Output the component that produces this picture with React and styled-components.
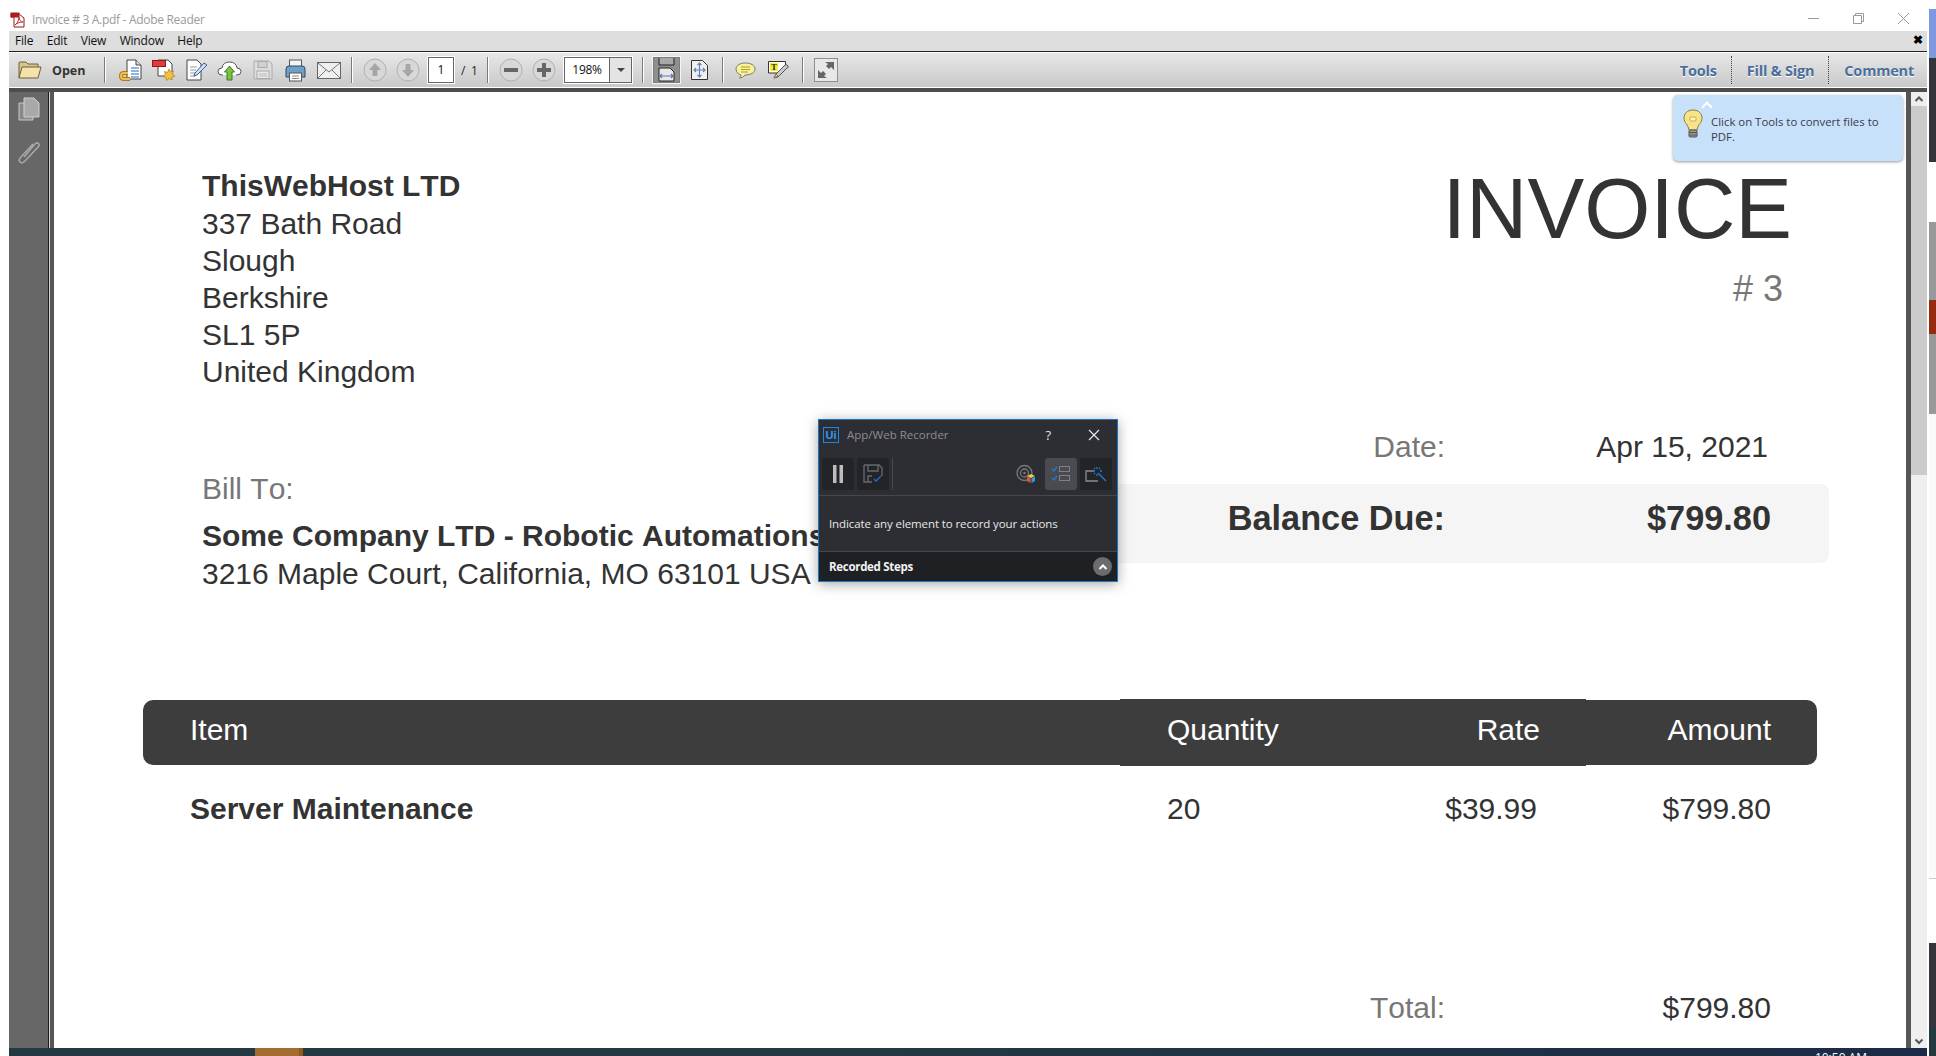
import React from 'react';
import styled, { createGlobalStyle } from 'styled-components';

const GlobalStyle = createGlobalStyle`
  html, body { margin: 0; padding: 0; background: #fff; }
  * { box-sizing: border-box; }
`;

const UI_FONT = '"Open Sans", "Noto Sans", sans-serif';
const DOC_FONT = '"Liberation Sans", Arial, sans-serif';

const Screen = styled.div`
  position: relative;
  display: flex;
  width: 1936px;
  height: 1056px;
  overflow: hidden;
  background: #fff;
`;

const Main = styled.div`
  display: flex;
  flex-direction: column;
  width: 1918px;
  margin-left: 9px;
  height: 100%;
`;

const TitleBar = styled.div`
  display: flex;
  align-items: center;
  height: 31px;
  padding: 7px 0 0 1px;
  font: 12px ${UI_FONT};
  color: #9a9a9a;
`;

const TitleIcon = styled.span`
  display: flex;
  margin-right: 5px;
`;

const TitleText = styled.span`
  letter-spacing: -0.3px;
`;

const WinControls = styled.div`
  display: flex;
  align-items: center;
  margin-left: auto;
  margin-top: -1px;
  gap: 34px;
  padding-right: 18px;
`;

const MenuBar = styled.div`
  display: flex;
  align-items: center;
  height: 20px;
  padding: 0 0 2px 6px;
  gap: 13.500px;
  background: #dedede;
  font: 12px ${UI_FONT};
  letter-spacing: -0.2px;
  color: #111;
`;

const CloseMark = styled.span`
  margin-left: auto;
  margin-right: 4px;
  font: bold 12px ${DOC_FONT};
  color: #000;
`;

const Toolbar = styled.div`
  display: flex;
  align-items: center;
  height: 37px;
  padding-top: 1px;
  border-top: 1px solid #222;
  border-bottom: 1px solid #fff;
  box-shadow: inset 0 1px 0 #fff;
  background: linear-gradient(#e8e8e8, #c9c9c9);
`;

const OpenButton = styled.div`
  display: flex;
  align-items: center;
  width: 95px;
  padding-left: 9px;
  gap: 10px;
  font: bold 12.5px ${UI_FONT};
  color: #333;
`;

const Sep = styled.div`
  width: 2px;
  height: 26px;
  margin-left: ${(p) => p.$ml}px;
  background: linear-gradient(90deg, #7a7a7a 50%, #fff 50%);
`;

const Tool = styled.div`
  display: flex;
  align-items: center;
  justify-content: center;
  flex: none;
  width: ${(p) => p.$w || 33}px;
  height: 28px;
  margin-left: ${(p) => p.$ml || 0}px;
`;

const ActiveTool = styled(Tool)`
  height: 26px;
  background: #8f8f8f;
  border: 1px solid #7d7d7d;
  outline: 1px solid #f4f4f4;
`;

const PageInput = styled.div`
  width: 26px;
  height: 26px;
  margin-left: 4px;
  border: 1px solid #666;
  outline: 1px solid #fff;
  background: #fff;
  text-align: center;
  font: 12px/24px ${UI_FONT};
  color: #111;
`;

const PageTotal = styled.span`
  margin-left: 7px;
  width: 15px;
  white-space: nowrap;
  font: 12px ${UI_FONT};
  word-spacing: 2.500px;
  color: #222;
`;

const ZoomBox = styled.div`
  display: flex;
  width: 68px;
  height: 26px;
  margin-left: 4px;
  border: 1px solid #666;
  outline: 1px solid #fff;
  background: #fff;
  font: 12px/24px ${UI_FONT};
  color: #111;
`;

const ZoomValue = styled.span`
  flex: 1;
  text-align: center;
  letter-spacing: -0.3px;
`;

const ZoomArrow = styled.span`
  display: flex;
  align-items: center;
  justify-content: center;
  width: 22px;
  border-left: 1px solid #666;
  background: #e4e4e4;
  &::after {
    content: '';
    border-left: 4px solid transparent;
    border-right: 4px solid transparent;
    border-top: 4px solid #444;
  }
`;

const PaneTabs = styled.div`
  display: flex;
  align-items: center;
  height: 100%;
  margin-left: auto;
`;

const PaneTab = styled.div`
  display: flex;
  align-items: center;
  height: 28px;
  padding: 0 ${(p) => p.$pr}px 0 ${(p) => p.$pl}px;
  border-left: ${(p) => (p.$first ? 'none' : '1px dotted #444')};
  font: bold 14.500px ${UI_FONT};
  letter-spacing: -0.2px;
  color: #4b6f9b;
  text-shadow: 0 1px 0 #fff;
`;

const DarkStrip = styled.div`
  height: 4px;
  background: #4d4d4d;
`;

const Body = styled.div`
  display: flex;
  flex: 1;
  min-height: 0;
`;

const NavPane = styled.div`
  display: flex;
  flex-direction: column;
  align-items: center;
  gap: 18px;
  width: 39px;
  padding-top: 5px;
  background: #676767;
`;

const NavEdge = styled.div`
  width: 6px;
  background: linear-gradient(90deg, #1c1c1c 1px, #d5d5d5 1px, #d5d5d5 2px, #565656 2px);
`;

const Page = styled.div`
  width: 1852px;
  overflow: hidden;
  background: #fff;
  font-family: ${DOC_FONT};
  font-kerning: none;
  color: #333;
`;

const PageEdge = styled.div`
  width: 5px;
  background: #565656;
`;

const ScrollBar = styled.div`
  display: flex;
  flex-direction: column;
  width: 16px;
  background: #efefef;
`;

const ScrollButton = styled.div`
  display: flex;
  align-items: center;
  justify-content: center;
  height: 14px;
  flex: none;
  margin-top: ${(p) => (p.$end ? 'auto' : 0)};
`;

const ScrollThumb = styled.div`
  height: 369px;
  background: #cbcbcb;
`;

const Taskbar = styled.div`
  height: 8px;
  flex: none;
  display: flex;
  background: linear-gradient(90deg, #233a42 0%, #233a42 40%, #1c2b47 100%);
  overflow: hidden;
`;

const TaskItem = styled.div`
  width: 48px;
  margin-left: 246px;
  background: #a66a33;
  border-right: 4px solid #96571f;
`;

const Clock = styled.span`
  margin: 2px 60px 0 auto;
  font: 12px/16px ${UI_FONT};
  color: #fff;
`;

const SideSliver = styled.div`
  display: flex;
  flex-direction: column;
  width: 7px;
  margin-left: 2px;
`;

const SliverPart = styled.div`
  height: ${(p) => p.$h}px;
  background: ${(p) => p.$c};
  flex: none;
`;

const DocHeader = styled.div`
  display: flex;
  justify-content: space-between;
  padding: 75px 114px 0 148px;
`;

const Address = styled.div`
  font-size: 30px;
  line-height: 37px;
`;

const Strong = styled.div`
  font-weight: bold;
  white-space: nowrap;
  line-height: ${(p) => p.$lh || 'inherit'};
`;

const AddressFirst = styled.div`
  margin-top: 1px;
`;

const InvoiceTitle = styled.div`
  text-align: right;
`;

const InvoiceWord = styled.div`
  font-size: 85px;
  line-height: 86px;
  margin-top: -1px;
`;

const InvoiceNumber = styled.div`
  margin-top: 16px;
  padding-right: 9px;
  font-size: 36px;
  line-height: 42px;
  color: #777;
`;

const Meta = styled.div`
  display: flex;
  justify-content: space-between;
  margin-top: 38px;
  padding: 0 77px 0 148px;
`;

const BillTo = styled.div`
  padding-top: 42px;
  font-size: 30px;
  line-height: 37px;
  white-space: nowrap;
`;

const BillLabel = styled.div`
  margin-bottom: 10px;
  color: #777;
`;

const Summary = styled.div`
  width: 789px;
`;

const SummaryRow = styled.div`
  display: grid;
  grid-template-columns: 405px 1fr;
  align-items: center;
  font-size: 30px;
  line-height: 37px;
  padding-right: ${(p) => p.$pr}px;
`;

const Label = styled.div`
  text-align: right;
  color: #777;
`;

const Value = styled.div`
  text-align: right;
`;

const BalanceBox = styled(SummaryRow)`
  height: 79px;
  margin-top: 19px;
  padding-bottom: 10px;
  border-radius: 8px;
  background: #f5f5f5;
  font-size: 34.300px;
  font-weight: bold;
  color: #333;
  ${Label} { color: #333; }
`;

const ItemsHead = styled.div`
  display: grid;
  grid-template-columns: 977px 219px 247px 231px;
  height: 65px;
  margin: 108px 89px 0;
  border-radius: 10px;
  background: #3d3d3d;
  color: #fff;
  font-size: 30px;
`;

const HeadCell = styled.div`
  display: flex;
  align-items: center;
  justify-content: ${(p) => (p.$right ? 'flex-end' : 'flex-start')};
  margin: ${(p) => (p.$mid ? '-1px 0' : '0')};
  padding: 0 ${(p) => p.$pr || 0}px 6px ${(p) => p.$pl || 0}px;
  background: ${(p) => (p.$mid ? '#3d3d3d' : 'transparent')};
`;

const ItemRow = styled.div`
  display: grid;
  grid-template-columns: 977px 219px 247px 231px;
  margin: 25px 89px 0;
  font-size: 30px;
  line-height: 37px;
`;

const ItemCell = styled.div`
  text-align: ${(p) => (p.$right ? 'right' : 'left')};
  padding: 0 ${(p) => p.$pr || 0}px 0 ${(p) => p.$pl || 0}px;
  font-weight: ${(p) => (p.$bold ? 'bold' : 'normal')};
  white-space: nowrap;
`;

const TotalRow = styled(SummaryRow)`
  width: 789px;
  margin: 162px 0 0 986px;
`;

const TipBox = styled.div`
  position: absolute;
  left: 1673px;
  top: 95px;
  display: flex;
  width: 230px;
  height: 66px;
  padding: 20px 10px 0 10px;
  gap: 8px;
  border-radius: 5px;
  background: #c8e1fb;
  box-shadow: 0 1px 3px rgba(0, 0, 0, 0.4);
  font: 11.400px/14.500px ${UI_FONT};
  color: #3a3a4a;
`;

const TipCaret = styled.span`
  position: absolute;
  top: 8px;
  left: 30px;
  width: 8px;
  height: 8px;
  border-left: 2px solid #fff;
  border-top: 2px solid #fff;
  transform: rotate(45deg);
`;

const Recorder = styled.div`
  position: absolute;
  left: 818px;
  top: 419px;
  display: flex;
  flex-direction: column;
  width: 300px;
  height: 163px;
  border: 1px solid #1c74c8;
  background: #2d2e33;
  box-shadow: 0 2px 12px rgba(0, 0, 0, 0.35);
  font-family: ${UI_FONT};
`;

const RecTitle = styled.div`
  display: flex;
  align-items: center;
  height: 31px;
  padding: 0 17px 2px 4px;
  font-size: 11.500px;
  color: #8d8d8f;
`;

const UiLogo = styled.span`
  width: 16px;
  height: 16px;
  margin-right: 8px;
  border: 1px solid #1b87e6;
  color: #2a9bf5;
  text-align: center;
  font: bold 11px/14px ${DOC_FONT};
`;

const RecHelp = styled.span`
  margin-left: auto;
  margin-right: 37px;
  font-size: 13px;
  color: #e4e4e4;
`;

const RecTools = styled.div`
  display: flex;
  align-items: flex-start;
  height: 45px;
  padding: 7px 5px 0 3px;
  border-bottom: 1px solid #47484c;
`;

const RecButton = styled.div`
  display: flex;
  align-items: center;
  justify-content: center;
  width: 32px;
  height: 32px;
  margin-left: ${(p) => p.$ml || 0}px;
  border-radius: 3px;
  background: ${(p) => (p.$active ? '#4a4b50' : p.$plain ? 'transparent' : '#232428')};
`;

const RecDivider = styled.div`
  width: 1px;
  height: 32px;
  margin-left: 3px;
  background: #47484c;
`;

const RecMessage = styled.div`
  display: flex;
  align-items: center;
  flex: 1;
  padding-left: 10px;
  font-size: 11.500px;
  color: #e8e8e8;
  letter-spacing: -0.1px;
`;

const RecFooter = styled.div`
  display: flex;
  align-items: center;
  justify-content: space-between;
  height: 30px;
  padding: 0 5px 0 10px;
  border-top: 1px solid #47484c;
  background: #1f2024;
  font-size: 11.500px;
  font-weight: bold;
  color: #f2f2f2;
  letter-spacing: -0.3px;
`;

const RecToggle = styled.span`
  display: flex;
  align-items: center;
  justify-content: center;
  width: 19px;
  height: 19px;
  border-radius: 50%;
  background: #6c6c6e;
`;

const PdfIcon = () => (
  <svg width="17" height="17" viewBox="0 0 17 17">
    <path d="M1 3h8l5 4v9H4V6H1z" fill="#fff" stroke="#8b1a1a" strokeWidth="1" />
    <rect x="0.5" y="1.5" width="9" height="5" fill="#a32020" />
    <path d="M5 14c3-2 4-6 4-8 0 3 2 5 4 5-3 0-6 1-8 3z" fill="none" stroke="#c62828" strokeWidth="1" />
  </svg>
);

const FolderIcon = () => (
  <svg width="24" height="20" viewBox="0 0 24 20">
    <path d="M1 18V3q0-1 1-1h6l2 2h10v3" fill="#d8c48c" stroke="#6f6137" />
    <path d="M1 18l3-11h19l-3 11z" fill="#f3e2ac" stroke="#6f6137" />
  </svg>
);

const CreateIcon = () => (
  <svg width="24" height="22" viewBox="0 0 24 22">
    <path d="M8 1h9l5 5v14H8z" fill="#fff" stroke="#444" />
    <path d="M17 1v5h5" fill="#ddd" stroke="#444" />
    <path d="M12 9h8M12 12h8M12 15h8M12 18h8" stroke="#2b66c4" />
    <path d="M9 14H5q-3 0-3 3t3 3h6" fill="none" stroke="#a77c16" strokeWidth="4" />
    <path d="M9 14H5q-3 0-3 3t3 3h6" fill="none" stroke="#f1c04a" strokeWidth="2" />
  </svg>
);

const CombineIcon = () => (
  <svg width="24" height="24" viewBox="0 0 24 24">
    <path d="M6 2h10l4 4v12H6z" fill="#fff" stroke="#444" />
    <rect x="0.5" y="2.5" width="13" height="6" fill="#e23b3b" stroke="#8d1a1a" />
    <path d="M17 11l1.500 3 3-1-1 3 2.500 2-3 1 0 3-3-1.500-2.500 2-.5-3-3-1 2.500-2-1-3 3 1z" fill="#f3c23c" stroke="#a67c16" strokeWidth="0.7" />
  </svg>
);

const EditIcon = () => (
  <svg width="22" height="22" viewBox="0 0 22 22">
    <path d="M1 1h10l4 4v16H1z" fill="#fff" stroke="#444" />
    <path d="M4 8h7M4 11h6M4 14h5M4 17h5" stroke="#999" />
    <path d="M8 17l1-3L18 4l3 2-10 10z" fill="#cfe0f5" stroke="#3c5d8f" />
  </svg>
);

const CloudIcon = () => (
  <svg width="25" height="21" viewBox="0 0 25 21">
    <path d="M6 15H5q-4 0-4-3.500Q1 8 5 8q1-6 7.500-6T20 8q4 0 4 3.500T20 15h-1" fill="#fff" stroke="#555" />
    <path d="M12.500 6L7.500 12H10v8h5v-8h2.500z" fill="#7cc142" stroke="#3f7d1f" />
  </svg>
);

const SaveIcon = () => (
  <svg width="20" height="20" viewBox="0 0 20 20">
    <path d="M1 1h15l3 3v15H1z" fill="#ddd" stroke="#aaa" />
    <rect x="5" y="1.500" width="9" height="6" fill="#d0d0d0" stroke="#aaa" />
    <rect x="4" y="11" width="12" height="7.500" fill="#e8e8e8" stroke="#aaa" />
    <path d="M6 14h8M6 16h8" stroke="#bbb" />
  </svg>
);

const PrintIcon = () => (
  <svg width="23" height="23" viewBox="0 0 23 23">
    <rect x="5.500" y="1" width="12" height="7" fill="#f4f4f4" stroke="#555" />
    <path d="M2 18V10q0-3 3-3h13q3 0 3 3v8z" fill="#6d9fc7" stroke="#2f4a63" />
    <rect x="5.500" y="14" width="12" height="8" fill="#fff" stroke="#555" />
    <path d="M8 17h7M8 19.500h7" stroke="#888" />
  </svg>
);

const MailIcon = () => (
  <svg width="24" height="17" viewBox="0 0 24 17">
    <rect x="0.500" y="0.500" width="23" height="16" fill="#efefef" stroke="#666" />
    <path d="M1 1l11 9L23 1M1 16l8-8M23 16l-8-8" fill="none" stroke="#777" />
  </svg>
);

const RoundIcon = ({ d, fill }) => (
  <svg width="24" height="24" viewBox="0 0 24 24">
    <circle cx="12" cy="12" r="11" fill="#d8d8d8" stroke="#b0b0b0" />
    <path d={d} fill={fill} />
  </svg>
);

const FitWidthIcon = () => (
  <svg width="17" height="24" viewBox="0 0 17 24">
    <path d="M1 0v7h15V0" fill="#a8a8a8" stroke="#222" />
    <path d="M1 23V10h11l4 4v9z" fill="#e8e8e8" stroke="#222" />
    <path d="M2 18h13M2 18l2-2M2 18l2 2M15 18l-2-2M15 18l-2 2" fill="none" stroke="#5b78b8" strokeWidth="1.200" />
  </svg>
);

const FitPageIcon = () => (
  <svg width="17" height="20" viewBox="0 0 17 20">
    <path d="M0.500 0.500h11l5 5v14h-16z" fill="#f0f0f0" stroke="#333" />
    <path d="M8.500 3v14M3 10h11M6.500 5l2-2 2 2M6.500 15l2 2 2-2M5 8l-2 2 2 2M12 8l2 2-2 2" fill="none" stroke="#6580bd" strokeWidth="1.200" />
  </svg>
);

const CommentIcon = () => (
  <svg width="21" height="17" viewBox="0 0 21 17">
    <path d="M10.500 1C5 1 1 3.500 1 7s3 5.500 5 6c0 1.500-1 2.500-1.500 3 2 0 4-1 5.500-3 6 0 10-2.500 10-6s-4-6-9.500-6z" fill="#f7f29a" stroke="#777" />
    <path d="M6 5h9M6 7.500h9M6 10h7" stroke="#b59a2c" />
  </svg>
);

const HighlightIcon = () => (
  <svg width="21" height="20" viewBox="0 0 21 20">
    <path d="M0.500 1.500h17v4L10 13H0.500z" fill="#fff" stroke="#333" />
    <rect x="2" y="3" width="8" height="8" fill="#f5ee2a" />
    <text x="6" y="10" textAnchor="middle" fontFamily="Liberation Serif" fontWeight="bold" fontSize="9" fill="#333">T</text>
    <path d="M6 18l2-4 9-9q2-1 3 1t-1 2l-9 9z" fill="#c9c9c9" stroke="#555" />
    <path d="M6 18l2-4 2 2z" fill="#f1e64c" stroke="#777" />
  </svg>
);

const ExpandIcon = () => (
  <svg width="24" height="24" viewBox="0 0 24 24">
    <rect x="0.500" y="0.500" width="23" height="23" fill="#e8e8e8" stroke="#8f8f8f" />
    <path d="M4 20v-8l3 3 2-2 3 3-2 2 3 2zM20 4v8l-3-3-2 2-3-3 2-2-3-2z" fill="#666" />
  </svg>
);

const PagesIcon = () => (
  <svg width="22" height="24" viewBox="0 0 22 24">
    <path d="M1 6h14v17H1z" fill="#8a8a8a" stroke="#c8c8c8" />
    <path d="M6 1h10l5 5v14H6z" fill="#a9a9a9" stroke="#d0d0d0" />
  </svg>
);

const ClipIcon = () => (
  <svg width="24" height="26" viewBox="0 0 24 26">
    <path d="M7 18L18 5q2-2 3.500-.5T21 8L8 22q-3 3-5 1t1-5L16 5" fill="none" stroke="#a8a8a8" strokeWidth="1.600" />
  </svg>
);

const BulbIcon = () => (
  <svg width="20" height="30" viewBox="0 0 20 30" style={{ flex: 'none', marginTop: -6 }}>
    <path d="M10 1C4 1 1 5 1 9c0 5 4 6 5 12h8c1-6 5-7 5-12 0-4-3-8-9-8z" fill="#f7e38c" stroke="#8a7a3a" />
    <rect x="7" y="8" width="6" height="4" rx="1" fill="#fff6c9" stroke="#d6a93a" />
    <rect x="6" y="21" width="8" height="7" rx="1" fill="#999" stroke="#555" />
    <path d="M6 23.500h8M6 26h8" stroke="#555" />
  </svg>
);

const Chevron = ({ up, color = '#555', size = 10 }) => (
  <svg width={size} height={size} viewBox="0 0 10 10">
    <path d={up ? 'M1.500 7L5 3.500 8.500 7' : 'M1.500 3.500L5 7l3.500-3.500'} fill="none" stroke={color} strokeWidth="2" />
  </svg>
);

const RecIconClose = () => (
  <svg width="12" height="12" viewBox="0 0 12 12">
    <path d="M1 1l10 10M11 1L1 11" stroke="#e8e8e8" strokeWidth="1.200" />
  </svg>
);

const PauseIcon = () => (
  <svg width="12" height="20" viewBox="0 0 12 20">
    <rect x="1" y="1" width="3.500" height="18" fill="#bdbdbd" />
    <rect x="7.500" y="1" width="3.500" height="18" fill="#bdbdbd" />
  </svg>
);

const RecSaveIcon = () => (
  <svg width="20" height="20" viewBox="0 0 20 20">
    <path d="M1 1h15l3 3v8M9 18H1V1" fill="none" stroke="#67686b" strokeWidth="1.400" />
    <path d="M5 1v6h10V1M5 18v-6h4" fill="none" stroke="#67686b" strokeWidth="1.400" />
    <path d="M11 15l2 2 5-5" fill="none" stroke="#1f6fc0" strokeWidth="1.400" />
  </svg>
);

const TargetIcon = () => (
  <svg width="20" height="20" viewBox="0 0 20 20">
    <circle cx="8.500" cy="9" r="7.500" fill="none" stroke="#77787b" strokeWidth="1.300" />
    <circle cx="8.500" cy="9" r="4" fill="none" stroke="#77787b" strokeWidth="1.300" />
    <circle cx="8.500" cy="9" r="1.300" fill="#77787b" />
    <path d="M15 10l4 2-4 2-4-2z" fill="#f2c14e" />
    <path d="M11 12.500l3.500 2V19L11 17z" fill="#e2552d" />
    <path d="M19 12.500l-3.500 2V19l3.500-2z" fill="#2e9be6" />
  </svg>
);

const StepsIcon = () => (
  <svg width="20" height="18" viewBox="0 0 20 18">
    <path d="M1 4l2 2 3-4M1 13l2 2 3-4" fill="none" stroke="#1f78d1" strokeWidth="1.400" />
    <rect x="8.500" y="1.500" width="10" height="5" fill="none" stroke="#808185" />
    <rect x="8.500" y="10.500" width="10" height="5" fill="none" stroke="#808185" />
  </svg>
);

const MagicIcon = () => (
  <svg width="22" height="16" viewBox="0 0 22 16">
    <path d="M9 5H1v10h12" fill="none" stroke="#8a8b8e" strokeWidth="1.300" />
    <path d="M13 7l8 8" stroke="#1f78d1" strokeWidth="1.400" />
    <path d="M12 1v2M12 8v2M8 5h2M15 5h2M9 2l1 1M15 2l-1 1M9 8l1-1" stroke="#1f78d1" strokeWidth="1.400" />
  </svg>
);

const sliverParts = [
  [9, '#fff'], [49, '#7f98e0'], [104, '#35363b'], [60, '#fff'], [78, '#999'], [34, '#962a10'],
  [80, '#999'], [464, '#fafafa'], [1, '#ccc'], [64, '#fff'], [85, '#35363b'], [28, '#24393f'],
];

export default function App() {
  return (
    <Screen>
      <GlobalStyle />
      <Main>
        <TitleBar>
          <TitleIcon><PdfIcon /></TitleIcon>
          <TitleText>Invoice # 3 A.pdf - Adobe Reader</TitleText>
          <WinControls>
            <svg width="11" height="11" viewBox="0 0 11 11"><path d="M0 5.500h11" stroke="#999" /></svg>
            <svg width="11" height="11" viewBox="0 0 11 11"><path d="M0.500 2.500h8v8h-8zM2.500 2.500v-2h8v8h-2" fill="none" stroke="#999" /></svg>
            <svg width="11" height="11" viewBox="0 0 11 11"><path d="M0 0l11 11M11 0L0 11" stroke="#999" /></svg>
          </WinControls>
        </TitleBar>
        <MenuBar>
          <span>File</span>
          <span>Edit</span>
          <span>View</span>
          <span>Window</span>
          <span>Help</span>
          <CloseMark>✖</CloseMark>
        </MenuBar>
        <Toolbar>
          <OpenButton><FolderIcon />Open</OpenButton>
          <Sep $ml={0} />
          <Tool $ml={8}><CreateIcon /></Tool>
          <Tool><CombineIcon /></Tool>
          <Tool><EditIcon /></Tool>
          <Tool><CloudIcon /></Tool>
          <Tool><SaveIcon /></Tool>
          <Tool><PrintIcon /></Tool>
          <Tool><MailIcon /></Tool>
          <Sep $ml={6} />
          <Tool $ml={5}><RoundIcon fill="#a6a6a6" d="M12 5l6 7h-3.500v6h-5v-6H6z" /></Tool>
          <Tool><RoundIcon fill="#a6a6a6" d="M12 19l6-7h-3.500V6h-5v6H6z" /></Tool>
          <PageInput>1</PageInput>
          <PageTotal>/ 1</PageTotal>
          <Sep $ml={11} />
          <Tool $ml={5}><RoundIcon fill="#666" d="M5 10h14v4H5z" /></Tool>
          <Tool><RoundIcon fill="#666" d="M10 5h4v5h5v4h-5v5h-4v-5H5v-4h5z" /></Tool>
          <ZoomBox><ZoomValue>198%</ZoomValue><ZoomArrow /></ZoomBox>
          <Sep $ml={10} />
          <ActiveTool $ml={9} $w={27}><FitWidthIcon /></ActiveTool>
          <Tool $ml={6} $w={27}><FitPageIcon /></Tool>
          <Sep $ml={9} />
          <Tool $ml={5}><CommentIcon /></Tool>
          <Tool><HighlightIcon /></Tool>
          <Sep $ml={7} />
          <Tool $ml={10} $w={24}><ExpandIcon /></Tool>
          <PaneTabs>
            <PaneTab $first $pl={0} $pr={14}>Tools</PaneTab>
            <PaneTab $pl={15} $pr={14}>Fill &amp; Sign</PaneTab>
            <PaneTab $pl={15} $pr={13}>Comment</PaneTab>
          </PaneTabs>
        </Toolbar>
        <DarkStrip />
        <Body>
          <NavPane>
            <PagesIcon />
            <ClipIcon />
          </NavPane>
          <NavEdge />
          <Page>
            <DocHeader>
              <Address>
                <Strong>ThisWebHost LTD</Strong>
                <AddressFirst>337 Bath Road</AddressFirst>
                <div>Slough</div>
                <div>Berkshire</div>
                <div>SL1 5P</div>
                <div>United Kingdom</div>
              </Address>
              <InvoiceTitle>
                <InvoiceWord>INVOICE</InvoiceWord>
                <InvoiceNumber># 3</InvoiceNumber>
              </InvoiceTitle>
            </DocHeader>
            <Meta>
              <BillTo>
                <BillLabel>Bill To:</BillLabel>
                <Strong $lh="38px">Some Company LTD - Robotic Automations</Strong>
                <div>3216 Maple Court, California, MO 63101 USA</div>
              </BillTo>
              <Summary>
                <SummaryRow $pr={61}>
                  <Label>Date:</Label>
                  <Value>Apr 15, 2021</Value>
                </SummaryRow>
                <BalanceBox $pr={58}>
                  <Label>Balance Due:</Label>
                  <Value>$799.80</Value>
                </BalanceBox>
              </Summary>
            </Meta>
            <ItemsHead>
              <HeadCell $pl={47}>Item</HeadCell>
              <HeadCell $mid $pl={47}>Quantity</HeadCell>
              <HeadCell $mid $right $pr={46}>Rate</HeadCell>
              <HeadCell $right $pr={46}>Amount</HeadCell>
            </ItemsHead>
            <ItemRow>
              <ItemCell $bold $pl={47}>Server Maintenance</ItemCell>
              <ItemCell $pl={47}>20</ItemCell>
              <ItemCell $right $pr={49}>$39.99</ItemCell>
              <ItemCell $right $pr={46}>$799.80</ItemCell>
            </ItemRow>
            <TotalRow $pr={58}>
              <Label>Total:</Label>
              <Value>$799.80</Value>
            </TotalRow>
          </Page>
          <PageEdge />
          <ScrollBar>
            <ScrollButton><Chevron up /></ScrollButton>
            <ScrollThumb />
            <ScrollButton $end><Chevron /></ScrollButton>
          </ScrollBar>
        </Body>
        <Taskbar>
          <TaskItem />
          <Clock>10:50 AM</Clock>
        </Taskbar>
      </Main>
      <SideSliver>
        {sliverParts.map(([h, c], i) => (
          <SliverPart key={i} $h={h} $c={c} />
        ))}
      </SideSliver>
      <TipBox>
        <TipCaret />
        <BulbIcon />
        <span>Click on Tools to convert files to PDF.</span>
      </TipBox>
      <Recorder>
        <RecTitle>
          <UiLogo>Ui</UiLogo>
          App/Web Recorder
          <RecHelp>?</RecHelp>
          <RecIconClose />
        </RecTitle>
        <RecTools>
          <RecButton><PauseIcon /></RecButton>
          <RecButton $ml={3}><RecSaveIcon /></RecButton>
          <RecDivider />
          <RecButton $plain $ml={117}><TargetIcon /></RecButton>
          <RecButton $active $ml={3}><StepsIcon /></RecButton>
          <RecButton $ml={3}><MagicIcon /></RecButton>
        </RecTools>
        <RecMessage>Indicate any element to record your actions</RecMessage>
        <RecFooter>
          Recorded Steps
          <RecToggle><Chevron up color="#fff" size={10} /></RecToggle>
        </RecFooter>
      </Recorder>
    </Screen>
  );
}
